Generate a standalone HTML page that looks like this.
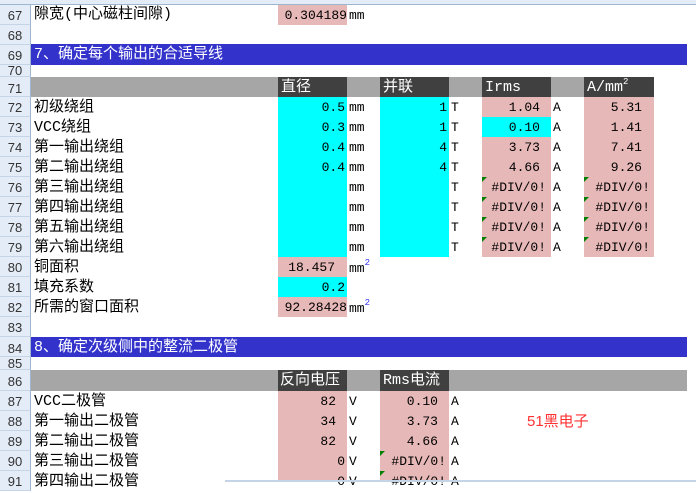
<!DOCTYPE html><html><head><meta charset="utf-8"><style>
body{margin:0;width:696px;height:482px;overflow:hidden;background:#fff;position:relative;font-family:"Liberation Mono","Noto Sans CJK SC",monospace;font-size:13px;color:#000}
div{position:absolute;box-sizing:border-box;white-space:nowrap;line-height:22px}
.rh{left:0;width:31px;background:#e4ecf7;border-right:1px solid #9eb6ce;border-bottom:1px solid #c5d4e6;text-align:center;color:#333;font-family:"Liberation Sans",sans-serif;font-size:13px;line-height:22px}
.t{font-family:"Liberation Mono","Noto Sans CJK SC",monospace;font-size:15px;left:34px;line-height:20px}
.p{background:#e6b8b7}.c{background:#00ffff}.g{background:#a6a6a6}.d{background:#404040;color:#fff;padding-left:3px;font-size:15px;line-height:22px}
.r{text-align:right}
.e::before{content:"";position:absolute;left:0;top:0;border-top:5px solid #008000;border-right:5px solid transparent}
.b{background:#3333cc;color:#fff;left:31px;width:656px;font-size:15px;padding-left:3px}
sup{font-size:9px;color:#33f;vertical-align:7px;line-height:0}
.d sup{color:#fff}
.red{color:#ff3333;font-family:"Liberation Sans","Noto Sans CJK SC",sans-serif;font-size:15px}
</style></head><body>
<div style="left:0;top:0;width:696px;height:5px;background:#e4ecf7;border-bottom:1px solid #9eb6ce"></div>

<div class="rh" style="top:5px;height:20px">67</div>
<div class="rh" style="top:25px;height:20px">68</div>
<div class="rh" style="top:45px;height:20px">69</div>
<div class="rh" style="top:65px;height:12px;line-height:12px">70</div>
<div class="rh" style="top:77px;height:20px;line-height:24px">71</div>
<div class="rh" style="top:97px;height:20px">72</div>
<div class="rh" style="top:117px;height:20px">73</div>
<div class="rh" style="top:137px;height:20px">74</div>
<div class="rh" style="top:157px;height:20px">75</div>
<div class="rh" style="top:177px;height:20px">76</div>
<div class="rh" style="top:197px;height:20px">77</div>
<div class="rh" style="top:217px;height:20px">78</div>
<div class="rh" style="top:237px;height:20px">79</div>
<div class="rh" style="top:257px;height:20px">80</div>
<div class="rh" style="top:277px;height:20px">81</div>
<div class="rh" style="top:297px;height:20px">82</div>
<div class="rh" style="top:317px;height:20px">83</div>
<div class="rh" style="top:337px;height:20px;line-height:24px">84</div>
<div class="rh" style="top:357px;height:13px;line-height:13px">85</div>
<div class="rh" style="top:370px;height:21px;line-height:24px">86</div>
<div class="rh" style="top:391px;height:20px">87</div>
<div class="rh" style="top:411px;height:20px">88</div>
<div class="rh" style="top:431px;height:20px">89</div>
<div class="rh" style="top:451px;height:20px">90</div>
<div class="rh" style="top:471px;height:20px">91</div>

<div class="t" style="top:5px">隙宽(中心磁柱间隙)</div>
<div class="p r" style="left:278px;top:5px;width:69px;height:20px">0.304189</div>
<div style="left:349px;top:5px">mm</div>

<div class="b" style="top:44px;height:21px;line-height:21px">7、确定每个输出的合适导线</div>

<div class="g" style="left:31px;top:77px;width:247px;height:20px"></div>
<div class="d" style="left:278px;top:77px;width:69px;height:20px">直径</div>
<div class="g" style="left:347px;top:77px;width:33px;height:20px"></div>
<div class="d" style="left:380px;top:77px;width:69px;height:20px">并联</div>
<div class="g" style="left:449px;top:77px;width:33px;height:20px"></div>
<div class="d" style="left:482px;top:77px;width:69px;height:20px">Irms</div>
<div class="g" style="left:551px;top:77px;width:33px;height:20px"></div>
<div class="d" style="left:584px;top:77px;width:70px;height:20px">A/mm<sup>2</sup></div>

<div class="c" style="left:278px;top:97px;width:69px;height:160px"></div>
<div class="c" style="left:380px;top:97px;width:69px;height:160px"></div>

<div class="t" style="top:98px">初级绕组</div>
<div class="t" style="top:118px">VCC绕组</div>
<div class="t" style="top:138px">第一输出绕组</div>
<div class="t" style="top:158px">第二输出绕组</div>
<div class="t" style="top:178px">第三输出绕组</div>
<div class="t" style="top:198px">第四输出绕组</div>
<div class="t" style="top:218px">第五输出绕组</div>
<div class="t" style="top:238px">第六输出绕组</div>

<div class="r" style="left:278px;top:97px;width:67px">0.5</div>
<div class="r" style="left:278px;top:117px;width:67px">0.3</div>
<div class="r" style="left:278px;top:137px;width:67px">0.4</div>
<div class="r" style="left:278px;top:157px;width:67px">0.4</div>
<div class="r" style="left:380px;top:97px;width:67px">1</div>
<div class="r" style="left:380px;top:117px;width:67px">1</div>
<div class="r" style="left:380px;top:137px;width:67px">4</div>
<div class="r" style="left:380px;top:157px;width:67px">4</div>

<div style="left:349px;top:98px;line-height:20px">mm<br>mm<br>mm<br>mm<br>mm<br>mm<br>mm<br>mm</div>
<div style="left:451px;top:98px;line-height:20px">T<br>T<br>T<br>T<br>T<br>T<br>T<br>T</div>
<div style="left:553px;top:98px;line-height:20px">A<br>A<br>A<br>A<br>A<br>A<br>A<br>A</div>

<div class="p" style="left:482px;top:97px;width:69px;height:160px"></div>
<div class="c" style="left:482px;top:117px;width:69px;height:20px"></div>
<div class="p" style="left:584px;top:97px;width:70px;height:160px"></div>

<div class="r" style="left:482px;top:97px;width:58px">1.04</div>
<div class="r" style="left:482px;top:117px;width:58px">0.10</div>
<div class="r" style="left:482px;top:137px;width:58px">3.73</div>
<div class="r" style="left:482px;top:157px;width:58px">4.66</div>
<div class="r" style="left:584px;top:97px;width:58px">5.31</div>
<div class="r" style="left:584px;top:117px;width:58px">1.41</div>
<div class="r" style="left:584px;top:137px;width:58px">7.41</div>
<div class="r" style="left:584px;top:157px;width:58px">9.26</div>

<div class="e r" style="left:482px;top:177px;width:64px;height:20px">#DIV/0!</div>
<div class="e r" style="left:482px;top:197px;width:64px;height:20px">#DIV/0!</div>
<div class="e r" style="left:482px;top:217px;width:64px;height:20px">#DIV/0!</div>
<div class="e r" style="left:482px;top:237px;width:64px;height:20px">#DIV/0!</div>
<div class="e r" style="left:584px;top:177px;width:66px;height:20px">#DIV/0!</div>
<div class="e r" style="left:584px;top:197px;width:66px;height:20px">#DIV/0!</div>
<div class="e r" style="left:584px;top:217px;width:66px;height:20px">#DIV/0!</div>
<div class="e r" style="left:584px;top:237px;width:66px;height:20px">#DIV/0!</div>

<div class="t" style="top:258px">铜面积</div>
<div class="t" style="top:278px">填充系数</div>
<div class="t" style="top:298px">所需的窗口面积</div>
<div class="p r" style="left:278px;top:257px;width:69px;height:20px;padding-right:12px">18.457</div>
<div class="c r" style="left:278px;top:277px;width:69px;height:20px;padding-right:2px">0.2</div>
<div class="p r" style="left:278px;top:297px;width:69px;height:20px">92.28428</div>
<div style="left:349px;top:258px">mm<sup>2</sup></div>
<div style="left:349px;top:298px">mm<sup>2</sup></div>

<div class="b" style="top:337px;height:20px;line-height:21px">8、确定次级侧中的整流二极管</div>

<div class="g" style="left:31px;top:370px;width:656px;height:21px"></div>
<div class="d" style="left:278px;top:370px;width:69px;height:21px;padding-left:2px">反向电压</div>
<div class="d" style="left:380px;top:370px;width:69px;height:21px">Rms电流</div>

<div class="t" style="top:392px">VCC二极管</div>
<div class="t" style="top:412px">第一输出二极管</div>
<div class="t" style="top:432px">第二输出二极管</div>
<div class="t" style="top:452px">第三输出二极管</div>
<div class="t" style="top:472px">第四输出二极管</div>

<div class="p" style="left:278px;top:391px;width:69px;height:91px"></div>
<div class="p" style="left:380px;top:391px;width:69px;height:91px"></div>
<div class="r" style="left:278px;top:391px;width:58px">82</div>
<div class="r" style="left:278px;top:411px;width:58px">34</div>
<div class="r" style="left:278px;top:431px;width:58px">82</div>
<div class="r" style="left:278px;top:451px;width:67px">0</div>
<div class="r" style="left:278px;top:471px;width:67px">0</div>
<div style="left:349px;top:392px;line-height:20px">V<br>V<br>V<br>V<br>V</div>
<div class="r" style="left:380px;top:391px;width:58px">0.10</div>
<div class="r" style="left:380px;top:411px;width:58px">3.73</div>
<div class="r" style="left:380px;top:431px;width:58px">4.66</div>
<div class="e r" style="left:380px;top:451px;width:66px;height:20px">#DIV/0!</div>
<div class="e r" style="left:380px;top:471px;width:66px;height:20px">#DIV/0!</div>
<div style="left:451px;top:392px;line-height:20px">A<br>A<br>A<br>A<br>A</div>
<div class="red" style="left:527px;top:411px">51黑电子</div>

<div style="left:225px;top:480px;width:471px;height:2px;background:#c5d4e6"></div>
</body></html>
